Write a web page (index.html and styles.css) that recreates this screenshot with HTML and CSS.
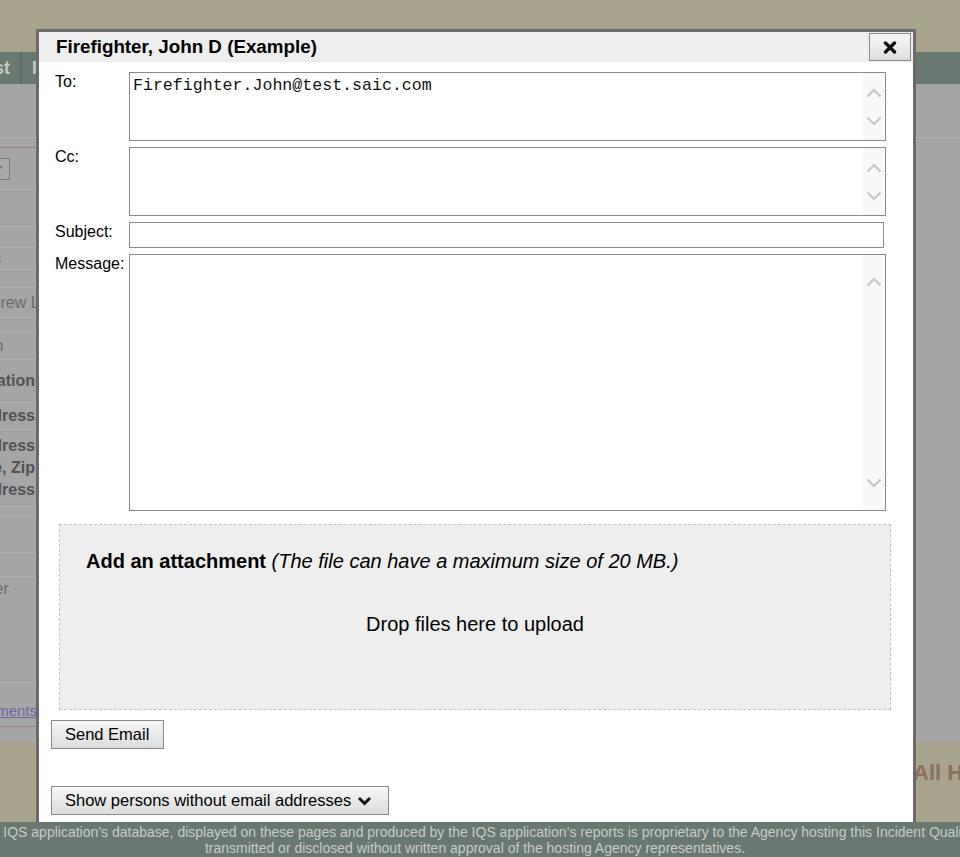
FILE: index.html
```html
<!DOCTYPE html>
<html lang="en">
<head>
    <meta charset="UTF-8">
    <title>Send Email - IQS</title>
    <link rel="stylesheet" href="styles.css">
</head>
<body>
    <!-- Page behind the modal (shown dimmed) -->
    <div class="page">
        <div class="topbar"></div>
        <nav class="nav">
            <span class="tab tab-first"><span>Roster List</span></span>
            <span class="tab">IQS Home</span>
        </nav>

        <div class="main">
            <div class="main-head"></div>
            <div class="side">
                <div class="row row-red" style="height: 10px"></div>
                <div class="row" style="height: 42px"><span class="select-box"><svg width="10" height="10" viewBox="0 0 10 10"><path d="M2 8 L8 2" stroke="#6a6a6a" stroke-width="1.5"/></svg></span></div>
                <div class="row" style="height: 37px"></div>
                <div class="row" style="height: 21px"></div>
                <div class="row value" style="height: 22px"><span>Yes</span></div>
                <div class="row" style="height: 18px"></div>
                <div class="row value" style="height: 30px"><span class="name">Andrew L</span></div>
                <div class="row" style="height: 15px"></div>
                <div class="row value" style="height: 27px"><span>Ann</span></div>
                <div class="row label" style="height: 43px"><span>Organization</span></div>
                <div class="row label" style="height: 27px"><span>Email Address</span></div>
                <div class="row label multi" style="height: 77px">
                    <span>Street Address</span>
                    <span>City, State, Zip</span>
                    <span>Mailing Address</span>
                </div>
                <div class="row" style="height: 10px"></div>
                <div class="row" style="height: 36px"></div>
                <div class="row" style="height: 24px"></div>
                <div class="row value top" style="height: 106px"><span>User</span></div>
                <div class="row row-red link-row" style="height: 44px"><a href="#">Documents</a></div>
            </div>
        </div>

        <div class="band">
            <h2 class="band-title">All Hazards Qualifications</h2>
        </div>

        <footer class="footer">
            <span class="footer-first">All information contained within the IQS application’s database, displayed on these pages and produced by the IQS application’s reports is proprietary to the Agency hosting this Incident Qualification System and may not be</span>
            <span>transmitted or disclosed without written approval of the hosting Agency representatives.</span>
        </footer>
    </div>

    <!-- Email dialog -->
    <div class="dialog">
        <div class="dialog-title">
            <span>Firefighter, John D (Example)</span>
            <button class="close-btn" title="Close">
                <svg width="14" height="13" viewBox="0 0 14 13"><path d="M2.5 2 L11.5 11 M11.5 2 L2.5 11" stroke="#111" stroke-width="3.4" stroke-linecap="round"/></svg>
            </button>
        </div>

        <div class="dialog-body">
            <div class="email-form">
                <label class="field-label">To:</label>
                <div class="area area-small">
                    <textarea>Firefighter.John@test.saic.com</textarea>
                    <div class="scroll">
                        <svg width="16" height="10" viewBox="0 0 16 10"><path d="M1.5 8.5 L8 2 L14.5 8.5" fill="none" stroke="#c6c6c6" stroke-width="2"/></svg>
                        <svg width="16" height="10" viewBox="0 0 16 10"><path d="M1.5 1.5 L8 8 L14.5 1.5" fill="none" stroke="#c6c6c6" stroke-width="2"/></svg>
                    </div>
                </div>

                <label class="field-label">Cc:</label>
                <div class="area area-small">
                    <textarea></textarea>
                    <div class="scroll">
                        <svg width="16" height="10" viewBox="0 0 16 10"><path d="M1.5 8.5 L8 2 L14.5 8.5" fill="none" stroke="#c6c6c6" stroke-width="2"/></svg>
                        <svg width="16" height="10" viewBox="0 0 16 10"><path d="M1.5 1.5 L8 8 L14.5 1.5" fill="none" stroke="#c6c6c6" stroke-width="2"/></svg>
                    </div>
                </div>

                <label class="field-label">Subject:</label>
                <input class="subject" type="text">

                <label class="field-label">Message:</label>
                <div class="area area-big">
                    <textarea></textarea>
                    <div class="scroll">
                        <svg width="16" height="10" viewBox="0 0 16 10"><path d="M1.5 8.5 L8 2 L14.5 8.5" fill="none" stroke="#c6c6c6" stroke-width="2"/></svg>
                        <svg width="16" height="10" viewBox="0 0 16 10"><path d="M1.5 1.5 L8 8 L14.5 1.5" fill="none" stroke="#c6c6c6" stroke-width="2"/></svg>
                    </div>
                </div>
            </div>

            <div class="dropzone">
                <div class="dropzone-title"><b>Add an attachment</b> <i>(The file can have a maximum size of 20 MB.)</i></div>
                <div class="dropzone-msg">Drop files here to upload</div>
            </div>

            <button class="btn btn-send">Send Email</button>

            <button class="btn btn-toggle">Show persons without email addresses
                <svg width="15" height="10" viewBox="0 0 15 10"><path d="M2 2 L7.5 7.5 L13 2" fill="none" stroke="#111" stroke-width="3"/></svg>
            </button>
        </div>
    </div>
</body>
</html>
```

FILE: styles.css
```css
* {
    margin: 0;
    padding: 0;
    box-sizing: border-box;
}

body {
    width: 960px;
    height: 857px;
    overflow: hidden;
    position: relative;
    font-family: 'Liberation Sans', Arial, sans-serif;
    background: #a5a5a5;
}

.page {
    display: flex;
    flex-direction: column;
    height: 857px;
}

.topbar {
    height: 52px;
    background: #a8a38b;
}

.nav {
    height: 32px;
    background: #697870;
    display: flex;
    align-items: stretch;
}

.tab {
    display: flex;
    align-items: center;
    color: #c3cac4;
    font-weight: bold;
    font-size: 18px;
    white-space: nowrap;
    padding-left: 10px;
}

.tab-first {
    box-sizing: content-box;
    width: 10px;
    padding-left: 0;
    padding-right: 10px;
    justify-content: flex-end;
    border-right: 2px solid #5e6c65;
}

.main {
    height: 658px;
    background: #a5a5a5;
}

.main-head {
    height: 54px;
    border-bottom: 1px solid #b3b3b3;
}

.side {
    width: 37px;
    display: flex;
    flex-direction: column;
}

.row {
    display: flex;
    align-items: center;
    justify-content: flex-end;
    border-bottom: 1px solid #adadad;
    white-space: nowrap;
    font-size: 16px;
}

.row-red {
    border-bottom-color: #a47a7a;
}

.row.value {
    color: #6c6c6c;
    justify-content: flex-start;
}

.row.value span {
    margin-left: -25px;
}

.row.value .name {
    margin-left: -28px;
}

.row.label {
    color: #525252;
    font-weight: bold;
    padding-right: 2px;
}

.row.multi {
    flex-direction: column;
    align-items: flex-end;
    justify-content: center;
    line-height: 22px;
}

.row.top {
    align-items: flex-start;
    padding-top: 3px;
}

.select-box {
    flex-shrink: 0;
    display: flex;
    align-items: center;
    justify-content: center;
    width: 22px;
    height: 22px;
    margin-right: 27px;
    border: 1px solid #7a7a7a;
    background: #a9a9a9;
}

.link-row {
    align-items: flex-end;
    padding-bottom: 7px;
}

.link-row a {
    color: #6b67a8;
    text-decoration: underline;
    font-size: 15px;
}

.band {
    height: 80px;
    background: #a8a38b;
    display: flex;
    align-items: center;
    padding-left: 913px;
    padding-bottom: 18px;
    white-space: nowrap;
}

.band-title {
    font-size: 22px;
    color: #8b705f;
}

.footer {
    position: relative;
    z-index: 5;
    height: 35px;
    background: #697870;
    color: #c6ccc7;
    font-size: 14px;
    line-height: 16px;
    padding-top: 2px;
    padding-right: 10px;
    display: flex;
    flex-direction: column;
    align-items: center;
    white-space: nowrap;
}

.footer-first {
    margin-right: 10px;
}

/* Modal dialog */
.dialog {
    position: absolute;
    left: 36px;
    top: 29px;
    width: 880px;
    height: 800px;
    background: #fff;
    border: 3px solid #6b6b6b;
    z-index: 2;
}

.dialog-title {
    height: 30px;
    background: #eeeeee;
    display: flex;
    align-items: center;
    justify-content: space-between;
    padding-left: 17px;
    padding-right: 2px;
    font-size: 18.8px;
    font-weight: bold;
    color: #000;
}

.close-btn {
    width: 42px;
    height: 28px;
    border: 1px solid #8a8a8a;
    background: linear-gradient(#f7f7f7, #dedede);
    display: flex;
    align-items: center;
    justify-content: center;
}

.dialog-body {
    padding: 10px 0 0 12px;
}

.email-form {
    display: grid;
    grid-template-columns: 74px 757px;
    row-gap: 6px;
    margin-left: 4px;
}

.field-label {
    font-size: 16px;
    color: #000;
    padding-top: 1px;
}

.area {
    display: flex;
    border: 1px solid #8a8a8a;
    background: #fff;
}

.area-small {
    height: 69px;
}

.area-big {
    height: 257px;
}

.area textarea {
    flex: 1;
    border: none;
    outline: none;
    resize: none;
    overflow: hidden;
    padding: 3px 3px;
    font-family: 'Liberation Mono', 'Courier New', monospace;
    font-size: 16.6px;
    color: #111;
}

.scroll {
    width: 22px;
    background: #f8f8f8;
    display: flex;
    flex-direction: column;
    justify-content: space-between;
    align-items: center;
    padding: 15px 0 14px;
}

.area-big .scroll {
    padding: 22px 0 22px;
}

.subject {
    width: 755px;
    height: 26px;
    border: 1px solid #8a8a8a;
    outline: none;
}

.dropzone {
    margin: 13px 0 0 8px;
    width: 832px;
    height: 186px;
    background: #eeeeee;
    border: 1px dashed #c6c6c6;
    padding: 25px 0 0 26px;
    font-size: 20px;
    color: #000;
}

.dropzone-msg {
    margin-top: 40px;
    padding-right: 26px;
    text-align: center;
}

.btn {
    display: flex;
    align-items: center;
    gap: 6px;
    height: 29px;
    padding: 0 13px;
    border: 1px solid #8a8a8a;
    background: linear-gradient(#f6f6f6, #dcdcdc);
    font-family: 'Liberation Sans', Arial, sans-serif;
    font-size: 16.5px;
    color: #000;
}

.btn-send {
    margin-top: 10px;
    width: 113px;
}

.btn-toggle {
    margin-top: 37px;
    width: 338px;
}
```
